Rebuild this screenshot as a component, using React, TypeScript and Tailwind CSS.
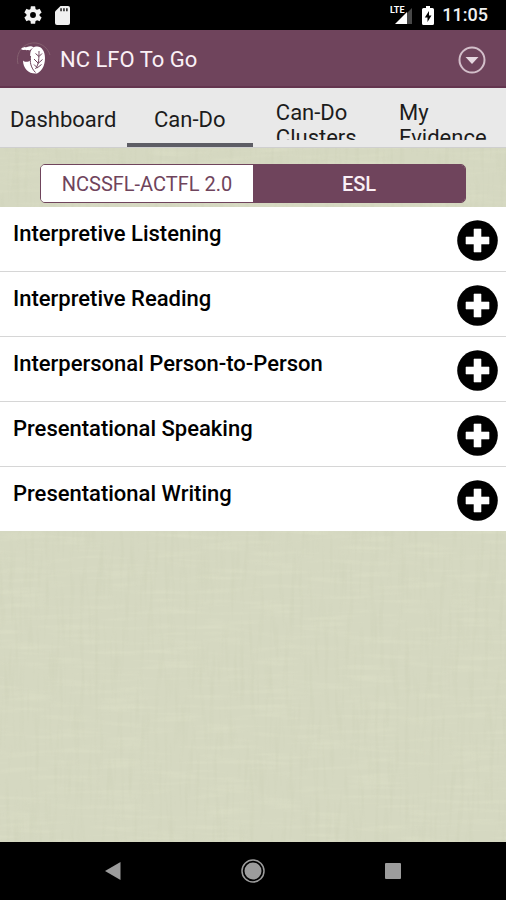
import React, { useState } from 'react';

const tabs = [
    { label: 'Dashboard', multiline: false },
    { label: 'Can-Do', multiline: false },
    { label: 'Can\u2011Do Clusters', multiline: true },
    { label: 'My Evidence', multiline: true },
];

const standards = ['NCSSFL-ACTFL 2.0', 'ESL'];

const categories = [
    'Interpretive Listening',
    'Interpretive Reading',
    'Interpersonal Person-to-Person',
    'Presentational Speaking',
    'Presentational Writing',
];

// Woven cloth behind the page content
const Linen: React.FC = () => (
    <svg className="absolute inset-0 -z-10 w-full h-full" aria-hidden="true">
        <filter id="weft" x="0" y="0" width="100%" height="100%" colorInterpolationFilters="sRGB">
            <feTurbulence type="fractalNoise" baseFrequency="0.02 0.2" numOctaves="2" seed="4" />
            <feColorMatrix values="0 0 0 0 0.9  0 0 0 0 0.91  0 0 0 0 0.81  2 0 0 0 -0.95" />
        </filter>
        <filter id="warp" x="0" y="0" width="100%" height="100%" colorInterpolationFilters="sRGB">
            <feTurbulence type="fractalNoise" baseFrequency="0.2 0.02" numOctaves="2" seed="9" />
            <feColorMatrix values="0 0 0 0 0.72  0 0 0 0 0.74  0 0 0 0 0.62  2 0 0 0 -0.95" />
        </filter>
        <rect width="100%" height="100%" fill="#d5d8c1" />
        <rect width="100%" height="100%" filter="url(#weft)" opacity="0.35" />
        <rect width="100%" height="100%" filter="url(#warp)" opacity="0.15" />
    </svg>
);

const GearIcon: React.FC = () => (
    <svg viewBox="0 0 24 24" className="w-[22px] h-[22px]" fill="#f2f2f2" aria-hidden="true">
        <path d="M19.14 12.94c.04-.3.06-.61.06-.94 0-.32-.02-.64-.07-.94l2.03-1.58a.49.49 0 0 0 .12-.61l-1.92-3.32a.49.49 0 0 0-.59-.22l-2.39.96a7 7 0 0 0-1.62-.94l-.36-2.54a.48.48 0 0 0-.48-.41h-3.84a.47.47 0 0 0-.47.41l-.36 2.54c-.59.24-1.13.57-1.62.94l-2.39-.96a.47.47 0 0 0-.59.22L2.74 8.87a.47.47 0 0 0 .12.61l2.03 1.58c-.05.3-.09.63-.09.94s.02.64.07.94l-2.03 1.58a.49.49 0 0 0-.12.61l1.92 3.32c.12.22.37.29.59.22l2.39-.96c.5.38 1.03.7 1.62.94l.36 2.54c.05.24.24.41.48.41h3.84c.24 0 .44-.17.47-.41l.36-2.54a6.6 6.6 0 0 0 1.62-.94l2.39.96c.22.08.47 0 .59-.22l1.92-3.32a.47.47 0 0 0-.12-.61zM12 15.2a3.2 3.2 0 1 1 0-6.4 3.2 3.2 0 0 1 0 6.4z" />
    </svg>
);

const SdCardIcon: React.FC = () => (
    <svg viewBox="0 0 15 19" className="w-[15px] h-[19px]" aria-hidden="true">
        <path d="M5.5 0H13a2 2 0 0 1 2 2v15a2 2 0 0 1-2 2H2a2 2 0 0 1-2-2V5.5z" fill="#f0f0f0" />
        <path d="M5.2 2.3h1.7v3H5.2zM8.1 2.3h1.7v3H8.1zM11 2.3h1.7v3H11z" fill="#333" />
    </svg>
);

const SignalIcon: React.FC = () => (
    <svg viewBox="0 0 24 20" className="w-6 h-5" aria-hidden="true">
        <path d="M17 8 22 3v16h-5z" fill="#484848" />
        <path d="M17 7v12H5z" fill="#fff" />
        <text x="0" y="8" fill="#fff" fontSize="9" fontWeight="700" fontFamily="Roboto, sans-serif">LTE</text>
    </svg>
);

const BatteryIcon: React.FC = () => (
    <svg viewBox="0 0 12 19" className="w-3 h-[19px]" aria-hidden="true">
        <path d="M4 0h4v2h2.5A1.5 1.5 0 0 1 12 3.5v14a1.5 1.5 0 0 1-1.5 1.5h-9A1.5 1.5 0 0 1 0 17.5v-14A1.5 1.5 0 0 1 1.5 2H4z" fill="#fff" />
        <path d="M7 5 2.8 11.5h2.7V16l4-6.5H7z" fill="#000" />
    </svg>
);

const Logo: React.FC = () => (
    <svg viewBox="0 0 36 36" className="w-9 h-9" aria-hidden="true">
        <path d="M2 22A16 16 0 0 1 34 13" fill="none" stroke="#84606f" strokeWidth="1" />
        <path d="M5 7C7 4.500 9 5.500 11 5c2-.8 3.500-1 5-.5l2 1c-3 1-3 2.500-5 3-1-1-2 .3-4-.7-1.500.5-3 .4-4-.8z" fill="#fff" />
        <path d="M20 4.500c5-.8 9 4 9 11.500 0 8-3.500 13.500-8 15.500C13.500 32.500 7 27 7 18.500c1 1.500 3.500 1.500 5.500 1L15 18c-1-3-1.500-8 1-11 1-1.500 2.500-2.300 4-2.500z" fill="#fff" />
        <path d="M14.500 14c-1 6 .5 12 5 16.500M19.500 27c3.500-5 3.500-11 3.500-18M22 21l-4-4M22 21.500l4.500-4M23 14.500l-3.500-3M23 14.500l3-3M21 26l4.500-3.500M21 25.500l-3-3" fill="none" stroke="#6d435b" strokeWidth="1" />
    </svg>
);

const PlusCircle: React.FC = () => (
    <svg viewBox="0 0 42 42" className="w-[42px] h-[42px]" aria-hidden="true">
        <circle cx="21.5" cy="20.5" r="20.3" fill="#000" />
        <path d="M18 9h7v8h8v7h-8v8h-7v-8h-8v-7h8z" fill="#fff" stroke="#fff" strokeWidth="0.6" strokeLinejoin="round" />
    </svg>
);

const App: React.FC = () => {
    const [activeTab, setActiveTab] = useState(1);
    const [standard, setStandard] = useState(1);

    return (
        <div className="relative isolate min-h-screen flex flex-col font-[Roboto,'Liberation_Sans',sans-serif] text-black">
            <Linen />

            {/* Status bar */}
            <div className="h-[30px] shrink-0 bg-black flex items-center justify-between pl-[22px] pr-[18px]">
                <div className="flex items-center gap-[11px]">
                    <GearIcon />
                    <SdCardIcon />
                </div>
                <div className="flex items-center gap-2">
                    <SignalIcon />
                    <BatteryIcon />
                    <span className="text-lg leading-6 font-medium text-[#f0f0f0]">11:05</span>
                </div>
            </div>

            {/* App bar */}
            <header className="h-[58px] shrink-0 bg-[#6f445c] border-b-2 border-[#64354f] flex items-center pt-1 pl-4 pr-5">
                <Logo />
                <h1 className="ml-2 text-[22px] leading-8 text-[#faf0f6]">NC LFO To Go</h1>
                <button className="ml-auto" aria-label="Open menu">
                    <svg viewBox="0 0 28 28" className="w-7 h-7" aria-hidden="true">
                        <circle cx="14" cy="14" r="12.5" fill="none" stroke="#d3bfca" strokeWidth="2" />
                        <path d="M7.5 11h13L14 18z" fill="#e6d8e0" />
                    </svg>
                </button>
            </header>

            {/* Tabs */}
            <div className="h-[60px] shrink-0 bg-[#e9e9e9] border-b border-[#cfcfcf] grid grid-cols-4" role="tablist">
                {tabs.map((tab, i) => (
                    <button
                        key={tab.label}
                        role="tab"
                        aria-selected={activeTab === i}
                        onClick={() => setActiveTab(i)}
                        className={`min-w-0 flex justify-center border-b-4 text-[22px] leading-[25px] text-[#1c1c1c] ${tab.multiline ? 'items-start pt-3' : 'items-center pt-2'} ${activeTab === i ? 'border-[#5d5d65]' : 'border-transparent'}`}
                    >
                        <span className={tab.multiline ? 'w-min h-10 overflow-y-clip text-left' : ''}>{tab.label}</span>
                    </button>
                ))}
            </div>

            <main className="grow">
                {/* Standards switch */}
                <div className="px-10 pt-4 pb-1">
                    <div className="h-[39px] flex rounded-[5px] border border-[#6f445c] overflow-hidden">
                        {standards.map((name, i) => (
                            <button
                                key={name}
                                aria-pressed={standard === i}
                                onClick={() => setStandard(i)}
                                className={`flex-1 text-xl leading-6 ${standard === i ? 'bg-[#6f445c] text-[#faf0f6] font-medium' : 'bg-white text-[#6f445c]'}`}
                            >
                                {name}
                            </button>
                        ))}
                    </div>
                </div>

                <ul className="bg-white divide-y-1 divide-[#d6d6d6]">
                    {categories.map(name => (
                        <li key={name}>
                            <button className="w-full h-16 pt-[13px] pl-[13px] pr-2 flex items-start justify-between text-left">
                                <span className="text-[22px] leading-7 font-medium">{name}</span>
                                <PlusCircle />
                            </button>
                        </li>
                    ))}
                </ul>
            </main>

            {/* System navigation */}
            <nav className="h-[58px] shrink-0 bg-black flex items-center justify-center gap-30" aria-label="System">
                <button aria-label="Back">
                    <svg viewBox="0 0 16 18" className="w-4 h-[18px]" aria-hidden="true">
                        <path d="M15.5 0v18L0 9z" fill="#9c9c9c" />
                    </svg>
                </button>
                <button aria-label="Home">
                    <svg viewBox="0 0 24 24" className="w-6 h-6" aria-hidden="true">
                        <circle cx="12" cy="12" r="11" fill="none" stroke="#9c9c9c" strokeWidth="1.5" />
                        <circle cx="12" cy="12" r="8.5" fill="#9c9c9c" />
                    </svg>
                </button>
                <button aria-label="Recent apps">
                    <svg viewBox="0 0 16 16" className="w-4 h-4" aria-hidden="true">
                        <rect width="16" height="16" rx="1" fill="#9c9c9c" />
                    </svg>
                </button>
            </nav>
        </div>
    );
};

export default App;
